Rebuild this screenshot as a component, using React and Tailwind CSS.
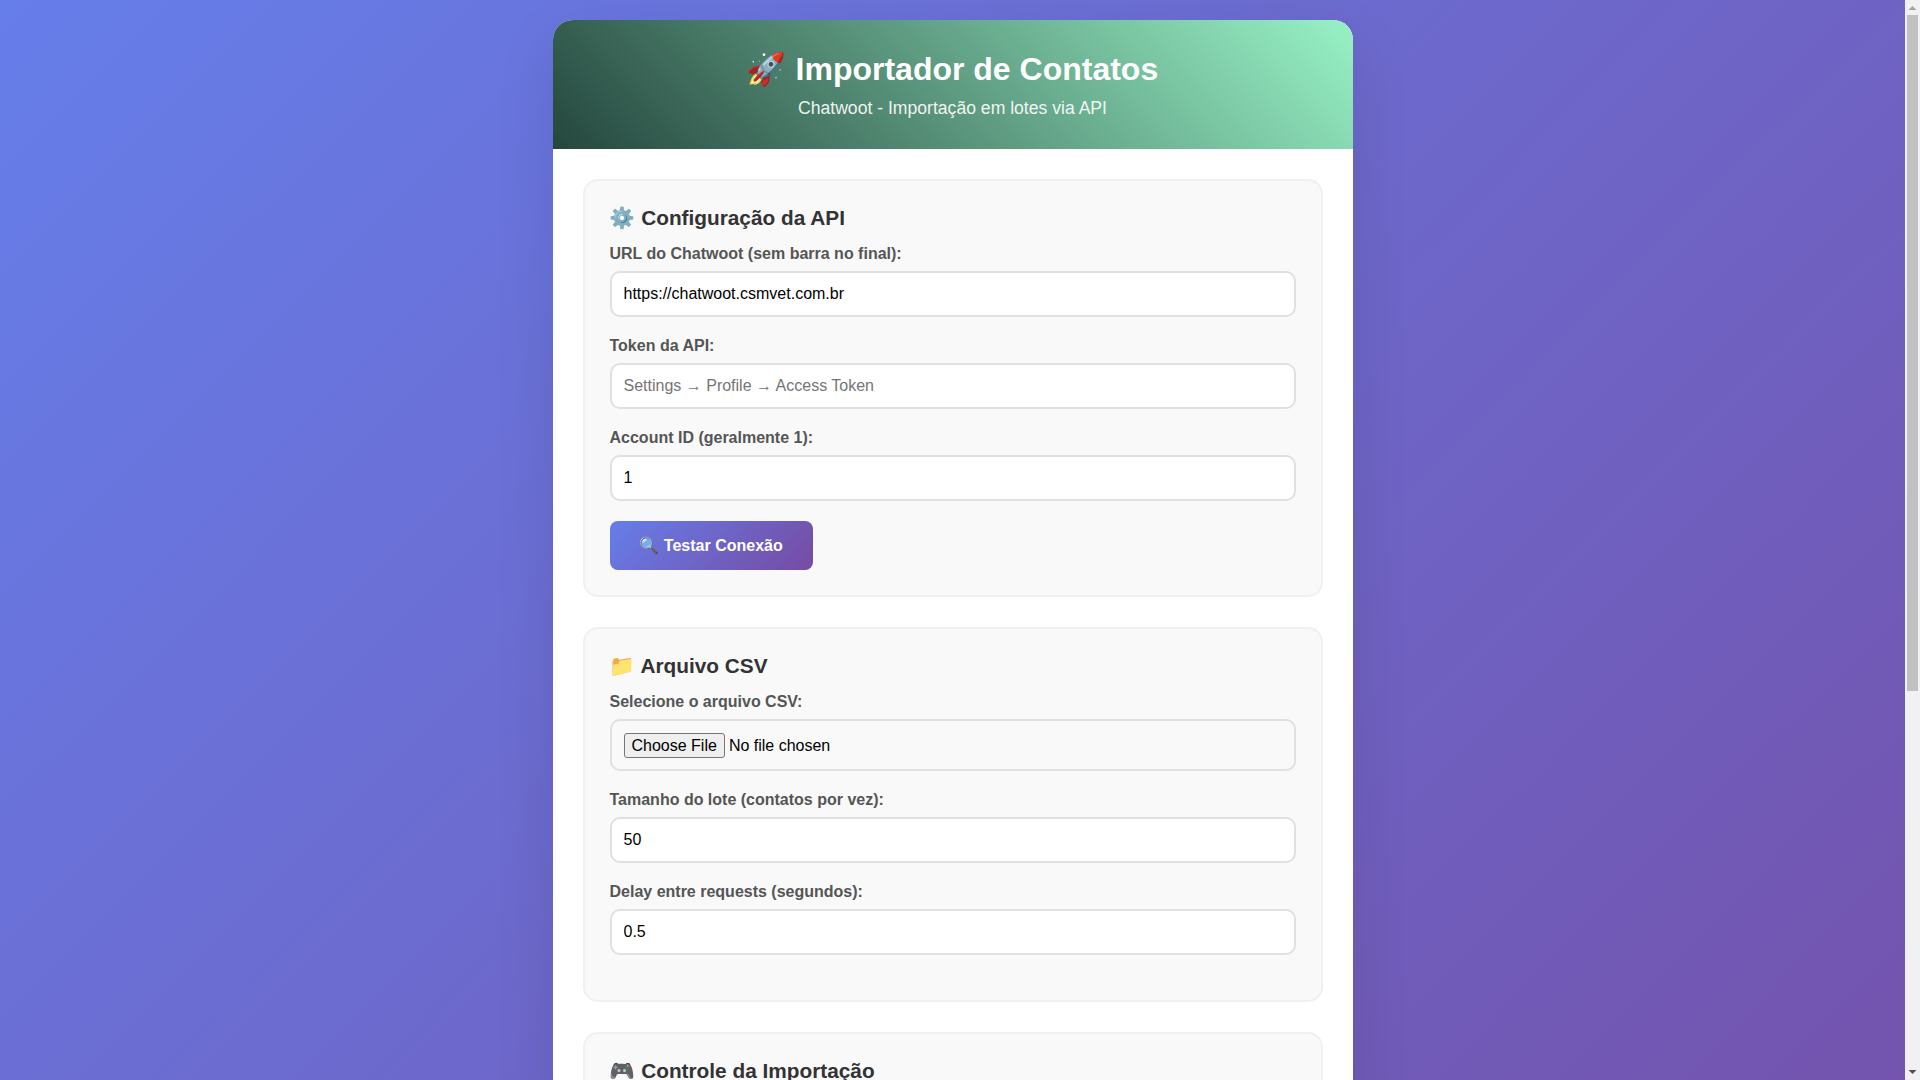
const inputClass =
  'block w-full h-[46px] rounded-[10px] border-2 border-[#e0e0e0] bg-white px-3 text-base text-black placeholder:text-[#757575] outline-none';

function Field({ label, children }) {
  return (
    <div className="mb-5">
      <label className="mb-2 block text-base leading-[18px] font-bold text-[#555]">{label}</label>
      {children}
    </div>
  );
}

function Section({ title, children }) {
  return (
    <section className="mb-[30px] rounded-[15px] border-2 border-[#f0f0f0] bg-[#f9f9f9] p-[25px]">
      <h2 className="mb-[15px] text-[20.8px] leading-6 font-bold text-[#333]">{title}</h2>
      {children}
    </section>
  );
}

// the window's scrollbar, as it stands in the picture
function Scrollbar() {
  return (
    <aside className="flex w-[15px] shrink-0 flex-col bg-[#f1f1f1]">
      <svg className="h-[15px] w-[15px] shrink-0" viewBox="0 0 15 15">
        <polygon points="3.5,10 11.5,10 7.5,6" fill="#a3a3a3" />
      </svg>
      <div className="mx-[2px] h-[676px] bg-[#c1c1c1]" />
      <svg className="mt-auto h-[15px] w-[15px] shrink-0" viewBox="0 0 15 15">
        <polygon points="3.5,5 11.5,5 7.5,9" fill="#505050" />
      </svg>
    </aside>
  );
}

export default function App() {
  return (
    <div
      className="flex h-screen overflow-hidden text-base"
      style={{ fontFamily: '"Liberation Sans", Arial, "Noto Color Emoji", sans-serif' }}
    >
      <div className="min-w-0 flex-1 overflow-hidden">
        <div className="h-[1677px] bg-[linear-gradient(135deg,#667eea_0%,#764ba2_100%)] p-5">
          <div className="mx-auto w-[800px] overflow-hidden rounded-[20px] bg-white shadow-[0_20px_60px_rgba(0,0,0,0.1)]">
            <header className="h-[129px] bg-[linear-gradient(45deg,#25463e,#98f2c6)] pt-[31px] text-center text-white">
              <h1 className="mb-2.5 text-[32px] leading-[37px] font-bold">🚀 Importador de Contatos</h1>
              <p className="text-[17.6px] leading-5 opacity-90">Chatwoot - Importação em lotes via API</p>
            </header>

            <main className="p-[30px] pb-5">
              <Section title="⚙️ Configuração da API">
                <Field label="URL do Chatwoot (sem barra no final):">
                  <input className={inputClass} type="text" defaultValue="https://chatwoot.csmvet.com.br" />
                </Field>
                <Field label="Token da API:">
                  <input className={inputClass} type="text" placeholder="Settings → Profile → Access Token" />
                </Field>
                <Field label="Account ID (geralmente 1):">
                  <input className={inputClass} type="number" defaultValue="1" />
                </Field>
                <button className="h-[49px] rounded-lg bg-[linear-gradient(135deg,#667eea,#764ba2)] px-[30px] text-base font-bold text-white">
                  🔍 Testar Conexão
                </button>
              </Section>

              <Section title="📁 Arquivo CSV">
                <Field label="Selecione o arquivo CSV:">
                  <input
                    className="block h-[52px] w-full rounded-[10px] border-2 border-[#e0e0e0] p-3 text-base text-black file:mr-1 file:h-[25px] file:rounded-[3px] file:border file:border-[#767676] file:bg-[#efefef] file:px-[7px] file:text-base"
                    type="file"
                  />
                </Field>
                <Field label="Tamanho do lote (contatos por vez):">
                  <input className={inputClass} type="number" defaultValue="50" />
                </Field>
                <Field label="Delay entre requests (segundos):">
                  <input className={inputClass} type="number" defaultValue="0.5" step="0.1" />
                </Field>
              </Section>

              <Section title="🎮 Controle da Importação" />
            </main>
          </div>
        </div>
      </div>
      <Scrollbar />
    </div>
  );
}
